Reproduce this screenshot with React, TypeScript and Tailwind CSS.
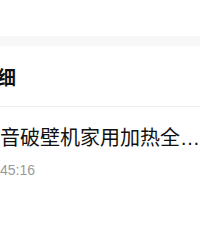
export default function App() {
  return (
    <div className="w-[200px] h-[240px] bg-white overflow-hidden" style={{ fontFamily: '"Noto Sans CJK SC", "Noto Sans", sans-serif' }}>
      <div className="h-[36px] bg-white" />
      <div className="h-[10px] bg-[#f7f7f7]" />
      <div className="h-[61px] border-b border-[#eeeeee] flex items-center">
        <div className="ml-[-22px] text-[19px] font-bold text-[#111] leading-none whitespace-nowrap">明细</div>
      </div>
      <div className="pt-[18px]">
        <div className="text-[20px] leading-[24px] text-[#111] whitespace-nowrap">
          音破壁机家用加热全<span style={{ fontFamily: '"Liberation Sans", sans-serif' }}>…</span>
        </div>
        <div className="mt-[12px] text-[14px] leading-[16px] text-[#999] whitespace-nowrap" style={{ fontFamily: '"Liberation Sans", sans-serif' }}>45:16</div>
      </div>
    </div>
  );
}
